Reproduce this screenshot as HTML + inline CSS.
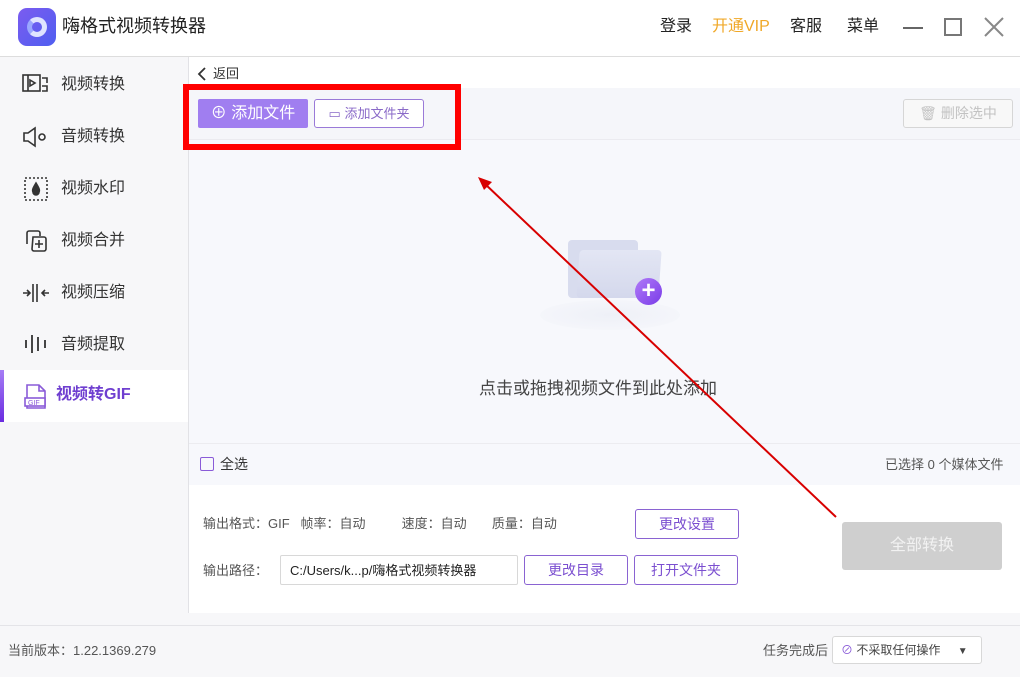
<!DOCTYPE html><html><head><meta charset="utf-8"><style>
*{margin:0;padding:0;box-sizing:border-box}
body{width:1020px;height:677px;position:relative;overflow:hidden;background:#fff;font-family:"Liberation Sans","Noto Sans CJK SC",sans-serif;color:#333;line-height:1.2}
.a{position:absolute}
.btn{position:absolute;border:1px solid #8a63d2;border-radius:3px;color:#7b4fd0;font-size:14px;display:flex;align-items:center;justify-content:center;background:#fff}
.side{font-size:16px;color:#333}
</style></head><body>
<div class="a" style="left:18px;top:8px;width:38px;height:38px;border-radius:9px;background:linear-gradient(135deg,#7b5cf0,#4f5ef0)"></div>
<div class="a" style="left:27px;top:17px;width:20px;height:20px;border-radius:50%;border:5px solid #dfe3ff;border-left-color:#9aa7ff"></div>
<div class="a" style="left:62px;top:16px;font-size:18px;color:#222">嗨格式视频转换器</div>
<div class="a" style="left:660px;top:17px;font-size:16px;color:#222">登录</div>
<div class="a" style="left:712px;top:17px;font-size:16px;color:#f0a828">开通VIP</div>
<div class="a" style="left:790px;top:17px;font-size:16px;color:#222">客服</div>
<div class="a" style="left:847px;top:17px;font-size:16px;color:#222">菜单</div>
<div class="a" style="left:903px;top:27px;width:20px;height:2px;background:#666"></div>
<div class="a" style="left:944px;top:18px;width:18px;height:18px;border:2px solid #777"></div>
<svg class="a" style="left:984px;top:17px" width="20" height="20"><path d="M1 1L19 19M19 1L1 19" stroke="#888" stroke-width="2"/></svg>
<div class="a" style="left:0;top:56px;width:1020px;height:1px;background:#ddd"></div>
<div class="a" style="left:0;top:57px;width:188px;height:556px;background:#f7f7f9"></div>
<div class="a" style="left:188px;top:57px;width:1px;height:556px;background:#e2e2e6"></div>
<div class="a side" style="left:61px;top:75px">视频转换</div>
<div class="a side" style="left:61px;top:127px">音频转换</div>
<div class="a side" style="left:61px;top:179px">视频水印</div>
<div class="a side" style="left:61px;top:231px">视频合并</div>
<div class="a side" style="left:61px;top:283px">视频压缩</div>
<div class="a side" style="left:61px;top:335px">音频提取</div>
<svg class="a" style="left:22px;top:72px" width="28" height="24" fill="none" stroke="#333" stroke-width="1.6"><rect x="1" y="3" width="17" height="16"/><path d="M6 3v16M8 8l5 3-5 3zM20 6h5v5M20 14h5v5h-5"/></svg>
<svg class="a" style="left:22px;top:126px" width="26" height="22" fill="none" stroke="#333" stroke-width="1.6"><path d="M2 7h4l7-5v18l-7-5H2z"/><circle cx="20" cy="11" r="3"/></svg>
<svg class="a" style="left:24px;top:177px" width="24" height="24" fill="none" stroke="#333" stroke-width="1.6" stroke-dasharray="2 2"><rect x="1" y="1" width="22" height="22"/><path d="M12 6c-3 5-4 7-3 9a3 3 0 0 0 6 0c1-2 0-4-3-9z" fill="#333" stroke-dasharray="0"/></svg>
<svg class="a" style="left:24px;top:229px" width="24" height="24" fill="none" stroke="#333" stroke-width="1.6"><path d="M3 15V4a2 2 0 0 1 2-2h9a2 2 0 0 1 2 2v3M9 8h11a2 2 0 0 1 2 2v10a2 2 0 0 1-2 2H10a2 2 0 0 1-2-2zM15 11v8M11 15h8"/></svg>
<svg class="a" style="left:22px;top:283px" width="28" height="20" fill="none" stroke="#333" stroke-width="1.6"><path d="M1 10h7M5 7l3 3-3 3M11 1v18M15 1v18M27 10h-7M23 7l-3 3 3 3"/></svg>
<svg class="a" style="left:24px;top:333px" width="24" height="22" stroke="#333" stroke-width="1.8"><path d="M2 7v8M8 2v18M14 4v14M21 7v8"/></svg>
<div class="a" style="left:0;top:370px;width:188px;height:52px;background:#fff"></div>
<div class="a" style="left:0;top:370px;width:4px;height:52px;background:linear-gradient(#a67ef5,#6a2be0)"></div>
<svg class="a" style="left:24px;top:384px" width="24" height="26" fill="none" stroke="#8a5bd8" stroke-width="1.6"><path d="M3 1h12l6 6v17H3z"/><path d="M15 1v6h6"/><rect x="1" y="14" width="20" height="8" fill="#fff"/><text x="4" y="21" font-size="7" fill="#8a5bd8" stroke="none" font-family="Liberation Sans">GIF</text></svg>
<div class="a" style="left:56px;top:385px;font-size:16px;font-weight:bold;color:#6f3fd0">视频转GIF</div>
<svg class="a" style="left:197px;top:67px" width="10" height="14"><path d="M8 1L2 7l6 6" stroke="#333" stroke-width="1.8" fill="none"/></svg>
<div class="a" style="left:213px;top:66px;font-size:13px">返回</div>
<div class="a" style="left:189px;top:88px;width:831px;height:52px;background:#f5f6fa;border-bottom:1px solid #ebebf0"></div>
<div class="a" style="left:198px;top:99px;width:110px;height:29px;background:#a07ef0;border-radius:2px;color:#fff;font-size:16px;display:flex;align-items:center;justify-content:center">⊕ 添加文件</div>
<div class="btn" style="left:314px;top:99px;width:110px;height:29px;font-size:13px;border-color:#9a7ad8;color:#8a6ac8">▭ 添加文件夹</div>
<div class="a" style="left:903px;top:99px;width:110px;height:29px;border:1px solid #d6d6d6;border-radius:3px;color:#c2c2c2;font-size:14px;display:flex;align-items:center;justify-content:center;background:#f8f8f8">🗑 删除选中</div>
<div class="a" style="left:189px;top:140px;width:831px;height:303px;background:#f7f8fc"></div>
<div class="a" style="left:540px;top:300px;width:140px;height:30px;border-radius:50%;background:radial-gradient(#eef0f7,rgba(247,248,252,0))"></div>
<div class="a" style="left:568px;top:240px;width:70px;height:58px;background:#d8dcee;border-radius:4px"></div>
<div class="a" style="left:578px;top:250px;width:82px;height:48px;background:linear-gradient(#e3e6f4,#d4d8ec);border-radius:4px;transform:skewX(-4deg)"></div>
<div class="a" style="left:635px;top:278px;width:27px;height:27px;border-radius:50%;background:linear-gradient(135deg,#b07af8,#7a3ce8);color:#fff;font-size:24px;font-weight:bold;line-height:26px;text-align:center">+</div>
<div class="a" style="left:479px;top:379px;font-size:17px;color:#444">点击或拖拽视频文件到此处添加</div>
<div class="a" style="left:189px;top:443px;width:831px;height:42px;background:#f7f8fc;border-top:1px solid #ececf0"></div>
<div class="a" style="left:200px;top:457px;width:14px;height:14px;border:1.5px solid #8a5bd8;border-radius:2px"></div>
<div class="a" style="left:220px;top:456px;font-size:14px">全选</div>
<div class="a" style="left:885px;top:457px;font-size:13px;color:#555">已选择 0 个媒体文件</div>
<div class="a" style="left:203px;top:516px;font-size:13px;color:#555;white-space:pre">输出格式：GIF   帧率：自动          速度：自动       质量：自动</div>
<div class="btn" style="left:635px;top:509px;width:104px;height:30px">更改设置</div>
<div class="a" style="left:203px;top:563px;font-size:13px;color:#555">输出路径：</div>
<div class="a" style="left:280px;top:555px;width:238px;height:30px;border:1px solid #d8d8d8;border-radius:2px;font-size:13px;color:#222;padding:7px 9px">C:/Users/k...p/嗨格式视频转换器</div>
<div class="btn" style="left:524px;top:555px;width:104px;height:30px">更改目录</div>
<div class="btn" style="left:634px;top:555px;width:104px;height:30px">打开文件夹</div>
<div class="a" style="left:842px;top:522px;width:160px;height:48px;background:#cfcfcf;border-radius:3px;color:#f2f2f2;font-size:16px;display:flex;align-items:center;justify-content:center">全部转换</div>
<div class="a" style="left:0;top:613px;width:1020px;height:64px;background:#f7f7f9"></div>
<div class="a" style="left:0;top:625px;width:1020px;height:1px;background:#e4e4e8"></div>
<div class="a" style="left:8px;top:643px;font-size:13px;color:#555">当前版本：1.22.1369.279</div>
<div class="a" style="left:763px;top:643px;font-size:13px;color:#555">任务完成后</div>
<div class="a" style="left:832px;top:636px;width:150px;height:28px;border:1px solid #d8d8d8;border-radius:3px;background:#fff;font-size:12px;color:#444;padding:6px 8px"><span style="color:#8a5bd8">⊘</span> 不采取任何操作 <span style="margin-left:14px;font-size:10px">▼</span></div>
<div class="a" style="left:183px;top:84px;width:278px;height:66px;border:6px solid #f00"></div>
<svg class="a" style="left:0;top:0" width="1020" height="677"><path d="M836 517L484 183" stroke="#d80000" stroke-width="2"/><path d="M478 177l14 5-8 8z" fill="#d80000"/></svg>
</body></html>
